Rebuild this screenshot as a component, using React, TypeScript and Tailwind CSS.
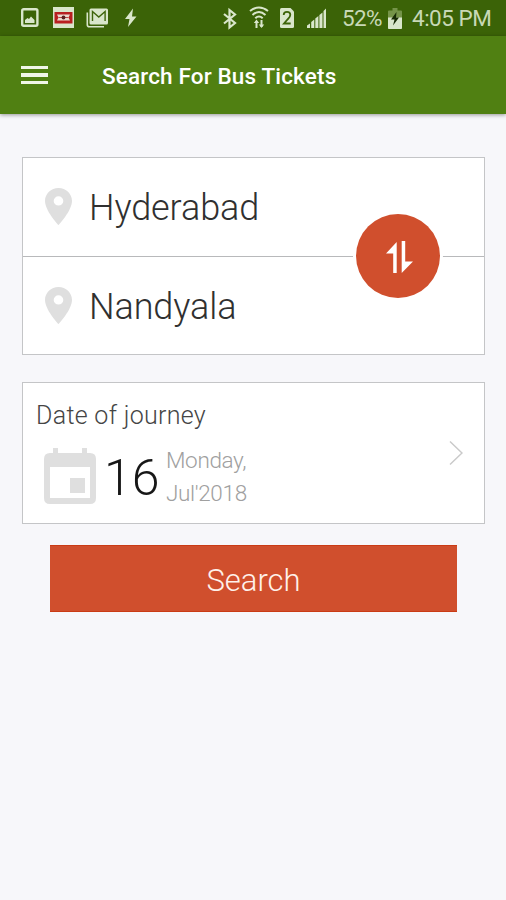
import type { ReactNode } from "react";

const cities = [
  { id: "from", name: "Hyderabad" },
  { id: "to", name: "Nandyala" },
];

function PinIcon() {
  return (
    <svg viewBox="5 2 14 20" className="h-[37px] w-[27px] shrink-0" preserveAspectRatio="none" fill="#dfdfdf">
      <path d="M12 2C8.13 2 5 5.13 5 9c0 5.25 7 13 7 13s7-7.75 7-13c0-3.87-3.13-7-7-7zm0 9.5a2.5 2.5 0 0 1 0-5 2.5 2.5 0 0 1 0 5z" />
    </svg>
  );
}

function NotificationIcons() {
  return (
    <svg width="118" height="24" viewBox="0 0 118 24" fill="#d9e6cb">
      {/* gallery */}
      <rect x="2.2" y="3.2" width="15.2" height="16.600" rx="1.500" fill="none" stroke="#d9e6cb" strokeWidth="2.4" />
      <path d="M5 17v-3l2.500-2 1.500 1 2-2.500 3.500 3.500v3z" />
      {/* ticket */}
      <rect x="33" y="1" width="21" height="21" />
      <rect x="34.500" y="6" width="18" height="11.500" fill="#b81f20" />
      <path d="M37 8.500h13l-1.500 3 1.500 3H37l1.500-3z" fill="#eadbd0" />
      <path d="M38.500 11.500h10" stroke="#b84a45" strokeWidth="1" />
      <circle cx="43.500" cy="11.500" r="1.900" fill="#5c2020" />
      {/* mail */}
      <path d="M67.300 6.500v12.200q0 2 2 2H84" fill="none" stroke="#d9e6cb" strokeWidth="1.600" />
      <rect x="69.500" y="2.500" width="18.500" height="16" rx="1.500" />
      <path d="M72.500 15V5.500l6.300 5.500 6.300-5.500V15" fill="none" stroke="#3d6409" strokeWidth="1.400" />
      {/* bolt */}
      <path d="M113 2.500l-8 10.500h4.500l-1.500 8 8.500-10.500H112z" />
    </svg>
  );
}

function SignalIcons() {
  return (
    <svg width="106" height="26" viewBox="222 4 106 26" fill="#d9e6cb">
      {/* bluetooth */}
      <path d="M224 13l11 9-5.500 4.500V9l5.500 4.500-11 9" fill="none" stroke="#d9e6cb" strokeWidth="2.2" />
      {/* wifi */}
      <g fill="none" stroke="#d9e6cb" strokeWidth="2">
        <path d="M250 10q9-7 18 0M252.500 14q6.500-6 13 0M255.300 17.200q3.700-3.500 7.400 0" />
        <path d="M256.500 27v-7M261.500 19v7" />
      </g>
      <path d="M253.800 22l2.700-3.500 2.700 3.500zM258.800 23.500l2.700 3.500 2.700-3.500z" />
      {/* sim card */}
      <path d="M281.500 7h9l3.500 3.500v15q0 1.500-1.500 1.500h-11q-1.500 0-1.500-1.500v-17q0-1.500 1.500-1.500z" />
      <path d="M283.700 14q0-3.200 3.300-3.200t3.300 3q0 2-2.300 4.200l-4 4.500h6.700" fill="none" stroke="#3d6409" strokeWidth="1.800" />
      {/* signal strength */}
      <path d="M307 27v-2.500l3-2V27zM311.200 27v-6l3.100-2.500V27zM315.300 27V17.500l3.100-2.500v12zM319.400 27V14l3.100-2.500V27zM323.500 27V10l2.500-2.500V27z" />
    </svg>
  );
}

function BatteryIcon() {
  return (
    <svg width="14" height="22" viewBox="0 0 14 22">
      <path d="M4.500 1h5v2.500H13q1 0 1 1V21q0 1-1 1H1q-1 0-1-1V4.500q0-1 1-1h3.500z" fill="#759449" />
      <path d="M0 10.500h14V21q0 1-1 1H1q-1 0-1-1z" fill="#d9e6cb" />
      <path d="M8.500 5L3 12.500h3.500L5 18.500 11 10.500H8z" fill="#172b05" />
    </svg>
  );
}

function StatusBar() {
  return (
    <div className="flex h-9 items-center bg-[#3b6307] text-[#c8d8b6]">
      <div className="ml-5">
        <NotificationIcons />
      </div>
      <div className="ml-[84px]">
        <SignalIcons />
      </div>
      <span className="ml-[14px] w-[46px] text-[22.500px] leading-none tracking-[-0.7px] whitespace-nowrap">52%</span>
      <BatteryIcon />
      <span className="ml-[10px] text-[22.500px] leading-none tracking-[-0.5px] whitespace-nowrap">4:05 PM</span>
    </div>
  );
}

function Panel({ className, children }: { className: string; children: ReactNode }) {
  return <div className={`border border-[#c4c5c7] bg-white ${className}`}>{children}</div>;
}

export default function App() {
  return (
    <div className="h-[900px] w-[506px] overflow-hidden bg-[#f7f7fa] font-['Roboto',sans-serif]">
      <StatusBar />
      <header className="flex h-[78px] items-center bg-[#508012] text-white shadow-[0_1px_4px_rgba(0,0,0,0.4)]">
        <button className="ml-[21px] flex w-[27px] flex-col gap-1" aria-label="Menu">
          <span className="h-[3.500px] bg-[#f0f6e8]" />
          <span className="h-[3.500px] bg-[#f0f6e8]" />
          <span className="h-[3.500px] bg-[#f0f6e8]" />
        </button>
        <h1 className="ml-[54px] pt-0.5 text-[22.500px] leading-none font-medium tracking-[0.15px]">
          Search For Bus Tickets
        </h1>
      </header>

      <main className="pt-[43px] pr-[21px] pl-[22px]">
        <Panel className="relative h-[198px]">
          <div className="divide-y divide-[#b8b9bb]">
            {cities.map((city) => (
              <div key={city.id} className="flex h-[99px] items-center pb-[2px] pl-[22px] last:h-[98px]">
                <PinIcon />
                <span className="ml-[17px] pt-1 text-[36px] leading-none font-light tracking-[-0.1px] text-[#303030]">
                  {city.name}
                </span>
              </div>
            ))}
          </div>
          <button
            className="absolute top-[56px] right-[44px] flex size-[84px] items-center justify-center rounded-full bg-[#d04f2d] pt-0.5 pl-0.5 shadow-[0_0_0_3px_#fff]"
            aria-label="Swap"
          >
            <svg width="28" height="32" viewBox="0 0 28 32" fill="#fff">
              <path d="M11.700 1v31H8.200V12.500H1zM16.700 0h3.500v20.500h7.800L16.700 32z" />
            </svg>
          </button>
        </Panel>

        <Panel className="mt-[27px] h-[142px] px-[13px]">
          <h2 className="pt-[19px] text-[25px] leading-[28px] font-light tracking-[0.3px] text-[#454545]">
            Date of journey
          </h2>
          <div className="flex">
            <svg width="52" height="56" viewBox="0 0 52 56" className="mt-[18px] ml-2" fill="#dfdfdf">
              <path
                fillRule="evenodd"
                d="M9 0h5v5h24V0h5v5h3q6 0 6 6v39q0 6-6 6H6q-6 0-6-6V11q0-6 6-6h3zM6 19v31h40V19z"
              />
              <rect x="26" y="30" width="15" height="15" />
            </svg>
            <span className="mt-[23px] ml-[8px] w-[58px] text-[50px] leading-none font-light text-[#171717]">16</span>
            <p className="mt-[14px] ml-1 text-[22.500px] leading-[33px] font-light tracking-[-0.35px] text-[#a0a0a0]">
              Monday,
              <br />
              Jul'2018
            </p>
            <svg
              width="14"
              height="26"
              viewBox="0 0 14 26"
              className="mt-[10px] mr-[8px] ml-auto"
              fill="none"
              stroke="#cacaca"
              strokeWidth="1.500"
            >
              <path d="M1 1.500l12 11.500L1 24.500" />
            </svg>
          </div>
        </Panel>

        <button className="mt-[21px] ml-[28px] flex h-[67px] w-[407px] items-center justify-center border-y border-[#ca3b15] bg-[#d04f2d] pt-1 text-[31px] leading-none font-light text-[#fff1ea]">
          Search
        </button>
      </main>
    </div>
  );
}
